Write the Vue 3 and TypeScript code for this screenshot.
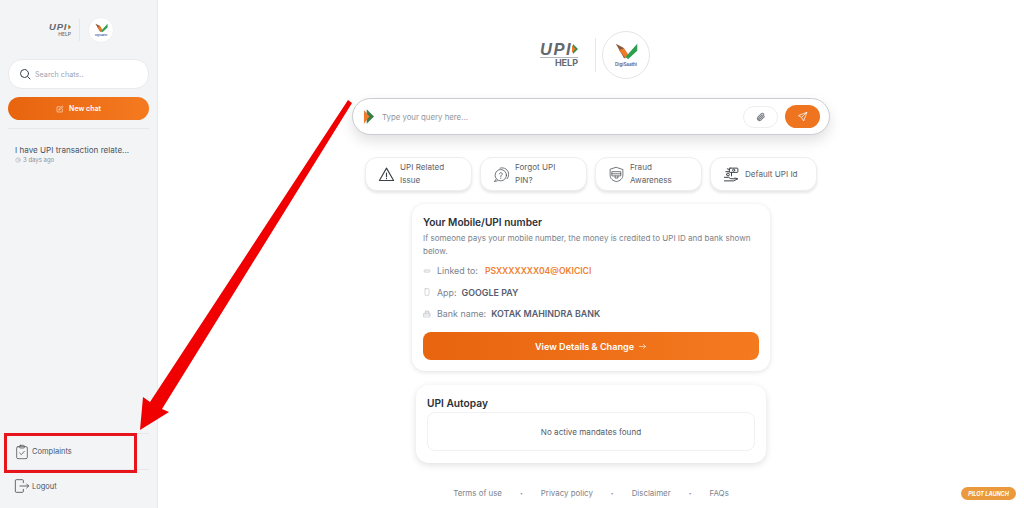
<script setup lang="ts">
const chips = [
  { id: 'issue', lines: ['UPI Related', 'Issue'] },
  { id: 'pin', lines: ['Forgot UPI', 'PIN?'] },
  { id: 'fraud', lines: ['Fraud', 'Awareness'] },
  { id: 'default', lines: ['Default UPI Id'] },
]
const footerLinks = ['Terms of use', 'Privacy policy', 'Disclaimer', 'FAQs']
</script>

<template>
  <div class="page">
    <aside class="sidebar">
      <div class="side-logo">
        <div class="upi small">
          <div class="upi-top">
            <span class="upi-word">UPI</span>
            <svg viewBox="0 0 6 10" class="upi-mark"><path d="M1 0l5 5-5 5z" fill="#2f8f4e"/><path d="M0 1l3.500 4L0 9z" fill="#ee7a2a"/></svg>
          </div>
          <span class="upi-strip"></span>
          <span class="upi-help">HELP</span>
        </div>
        <span class="divider"></span>
        <div class="saathi small">
          <svg viewBox="0 0 30 22" class="tick"><path d="M1 1l10 5 5 10-4 4z" fill="#8a5a3c"/><path d="M5 9l9 11 4-4-6-9z" fill="#ee7a2a"/><path d="M14 18L29 1v9L17 21z" fill="#2f9e4f"/></svg>
          <span>DigiSaathi</span>
        </div>
      </div>
      <div class="search">
        <svg viewBox="0 0 24 24" class="search-icon"><circle cx="11" cy="11" r="8"/><path d="M17 17l5 5"/></svg>
        <span>Search chats..</span>
      </div>
      <button class="new-chat">
        <svg viewBox="0 0 24 24" class="new-icon"><path d="M12 5H5a2 2 0 0 0-2 2v12a2 2 0 0 0 2 2h12a2 2 0 0 0 2-2v-7"/><path d="M9 15l1-4 9-8 2 2-9 9z"/></svg>
        New chat
      </button>
      <div class="rule first"></div>
      <div class="history">
        <div class="history-title">I have UPI transaction relate...</div>
        <div class="history-time">
          <svg viewBox="0 0 24 24"><circle cx="12" cy="12" r="9"/><path d="M12 7v5l3 2"/></svg>
          3 days ago
        </div>
      </div>
      <div class="side-bottom">
        <div class="rule"></div>
        <div class="side-item complaints">
          <svg viewBox="0 0 24 24"><rect x="4" y="4" width="16" height="18" rx="2"/><rect x="8.500" y="2" width="7" height="4" rx="1"/><path d="M8.500 13.500l2.500 2.500 4.500-5"/></svg>
          Complaints
        </div>
        <div class="rule"></div>
        <div class="side-item logout">
          <svg viewBox="0 0 24 24"><path d="M14 7V4a1.500 1.500 0 0 0-1.500-1.500h-9A1.500 1.500 0 0 0 2 4v16a1.500 1.500 0 0 0 1.500 1.500h9A1.500 1.500 0 0 0 14 20v-3"/><path d="M9 12h13M19 9l3 3-3 3"/></svg>
          Logout
        </div>
      </div>
    </aside>

    <main class="main">
      <div class="main-logo">
        <div class="upi">
          <div class="upi-top">
            <span class="upi-word">UPI</span>
            <svg viewBox="0 0 6 10" class="upi-mark"><path d="M1 0l5 5-5 5z" fill="#2f8f4e"/><path d="M0 1l3.500 4L0 9z" fill="#ee7a2a"/></svg>
          </div>
          <span class="upi-strip"></span>
          <span class="upi-help">HELP</span>
        </div>
        <span class="divider"></span>
        <div class="saathi">
          <svg viewBox="0 0 30 22" class="tick"><path d="M1 1l10 5 5 10-4 4z" fill="#8a5a3c"/><path d="M5 9l9 11 4-4-6-9z" fill="#ee7a2a"/><path d="M14 18L29 1v9L17 21z" fill="#2f9e4f"/></svg>
          <span>DigiSaathi</span>
        </div>
      </div>

      <div class="query">
        <svg viewBox="0 0 12 16" class="bhim"><path d="M4 0l8 8-8 8z" fill="#3a7d4a"/><path d="M1 1l6 7-6 8z" fill="#ee7a2a"/></svg>
        <span class="placeholder">Type your query here...</span>
        <span class="attach">
          <svg viewBox="0 0 24 24"><path d="M20 11l-8.500 8.500a5 5 0 0 1-7-7L13 4a3.300 3.300 0 0 1 4.700 4.700l-8.500 8.500a1.700 1.700 0 0 1-2.400-2.400L15 7"/></svg>
        </span>
        <span class="send">
          <svg viewBox="0 0 24 24"><path d="M21 3L3 10l7 4 4 7z"/><path d="M21 3L10 14"/></svg>
        </span>
      </div>

      <div class="chips">
        <div v-for="chip in chips" :key="chip.id" class="chip">
          <svg v-if="chip.id === 'issue'" viewBox="0 0 24 24" class="chip-icon"><path d="M12 3L2 20.500h20z"/><path d="M12 10v5M12 17.500v.5"/></svg>
          <svg v-else-if="chip.id === 'pin'" viewBox="0 0 24 24" class="chip-icon thin"><circle cx="11" cy="13" r="8"/><path d="M9 11a2 2 0 1 1 3 2c-1 .5-1 1-1 2M11 17v.5"/><path d="M10 3a9 9 0 0 1 12 9 8 8 0 0 1-2 6M4 19l-2 3 4-1"/></svg>
          <svg v-else-if="chip.id === 'fraud'" viewBox="0 0 24 24" class="chip-icon thin"><path d="M12 2l9 3v8c0 5-4 8-9 9-5-1-9-4-9-9V5z"/><path d="M6 8h12v6H6zM6 11h12M10 14v3h4v-3"/></svg>
          <svg v-else viewBox="0 0 24 24" class="chip-icon thin strong"><rect x="9" y="3" width="12" height="6" rx="1"/><circle cx="15" cy="6" r="1.500"/><path d="M12 9v5M6 4l3 1M4 8h5M2 16h6l3 2h6M2 21h13l6-3-4-1M5 12a2 2 0 1 0 4 0 2 2 0 1 0-4 0"/></svg>
          <span class="chip-text">
            <span v-for="line in chip.lines" :key="line">{{ line }}</span>
          </span>
        </div>
      </div>

      <section class="card mobile">
        <h2>Your Mobile/UPI number</h2>
        <p class="desc">If someone pays your mobile number, the money is credited to UPI ID and bank shown below.</p>
        <div class="row">
          <svg viewBox="0 0 24 24"><path d="M10 8H7a4 4 0 0 0 0 8h3M14 8h3a4 4 0 0 1 0 8h-3M8 12h8"/></svg>
          <span class="label">Linked to:</span><b class="link">PSXXXXXXX04@OKICICI</b>
        </div>
        <div class="row">
          <svg viewBox="0 0 24 24"><rect x="6" y="2" width="12" height="20" rx="2"/></svg>
          <span class="label">App:</span><b>GOOGLE PAY</b>
        </div>
        <div class="row">
          <svg viewBox="0 0 24 24"><path d="M7 10V3h10v7M3 10h18v11H3zM3 15h18M8 6h8"/></svg>
          <span class="label">Bank name:</span><b>KOTAK MAHINDRA BANK</b>
        </div>
        <button class="details">
          View Details &amp; Change
          <svg viewBox="0 0 24 24"><path d="M4 12h16M14 6l6 6-6 6"/></svg>
        </button>
      </section>

      <section class="card autopay">
        <h2>UPI Autopay</h2>
        <div class="empty">No active mandates found</div>
      </section>

      <footer class="footer">
        <template v-for="(item, i) in footerLinks" :key="item">
          <span v-if="i > 0" class="dot">•</span>
          <span>{{ item }}</span>
        </template>
      </footer>
    </main>

    <span class="pilot">PILOT LAUNCH</span>

    <svg class="annotation" viewBox="0 0 1024 508">
      <path d="M348 100L352 103L162 409L169 412L140 430L143 397L150 402z" fill="#f00000"/>
    </svg>
    <div class="red-box"></div>
  </div>
</template>

<style>
html, body { margin: 0; background: #fff; }
</style>

<style scoped>
.page {
  position: relative;
  display: flex;
  width: 1024px;
  height: 508px;
  overflow: hidden;
  font-family: Inter, "Liberation Sans", sans-serif;
  color: #374151;
  background: #fff;
}
svg { fill: none; stroke: currentColor; stroke-width: 1.6; stroke-linecap: round; stroke-linejoin: round; flex: none; }
.sidebar {
  flex: none;
  display: flex;
  flex-direction: column;
  background: #f3f4f6;
  border-right: 1px solid #e7e9ec;
  padding: 16px 8px 0;
  width: 141px;
}
.side-logo { display: flex; align-items: center; justify-content: center; gap: 8px; height: 28px; padding-left: 6px; }
.upi { width: 38px; display: flex; flex-direction: column; align-items: flex-end; }
.upi-top { display: flex; align-items: center; width: 100%; justify-content: space-between; }
.upi-word { font: italic 700 16.500px/13px "Liberation Sans", sans-serif; letter-spacing: 1.500px; color: #63676e; }
.upi-mark { width: 6px; height: 10px; stroke: none; }
.upi-strip { width: 100%; height: 1px; background: #b5b8bc; margin-top: 1px; }
.upi-help { font: 700 9px/10px Inter, sans-serif; color: #666b73; }
.upi.small { width: 22px; }
.upi.small .upi-word { font-size: 9.500px; line-height: 8px; letter-spacing: .8px; }
.upi.small .upi-mark { width: 3px; height: 6px; }
.upi.small .upi-strip { display: none; }
.upi.small .upi-help { font-size: 5px; line-height: 6px; font-weight: 500; }
.divider { width: 1px; align-self: stretch; background: #e5e7eb; margin: 3px 0; }
.saathi {
  width: 48px; height: 48px; border-radius: 50%; background: #fff; border: 1px solid #e3e5e8;
  box-sizing: border-box; display: flex; flex-direction: column; align-items: center; justify-content: center;
  font-size: 4.500px; font-weight: 600; color: #3f5aa0;
}
.saathi .tick { width: 23px; height: 17px; stroke: none; margin-bottom: 2px; }
.saathi.small { width: 26px; height: 26px; font-size: 2.500px; border-color: #eef0f2; }
.saathi.small .tick { width: 13px; height: 10px; margin-bottom: 1px; }
.search {
  margin-top: 15px; height: 28px; border-radius: 14px; background: #fff; border: 1px solid #e8eaed;
  display: flex; align-items: center; gap: 4px; padding: 0 10px; font-size: 7.200px; color: #9ca3af;
}
.search-icon { width: 12px; height: 12px; color: #374151; stroke-width: 2; }
.new-chat {
  margin-top: 8px; height: 23px; border: 0; border-radius: 12px; padding: 0;
  background: linear-gradient(90deg, #e8640f, #f47a20); color: #fff; font: 600 7px Inter, sans-serif;
  display: flex; align-items: center; justify-content: center; gap: 5px;
}
.new-icon { width: 8px; height: 8px; }
.rule { height: 1px; background: #e5e7eb; }
.rule.first { margin-top: 8px; }
.history { padding: 15px 7px 0; }
.history-title { font-size: 8.100px; line-height: 12px; color: #4b5563; white-space: nowrap; }
.history-time { font-size: 6px; color: #8b929c; display: flex; align-items: center; gap: 2px; }
.history-time svg { width: 6px; height: 6px; }
.side-bottom { margin-top: auto; padding-bottom: 6px; }
.side-item { display: flex; align-items: center; gap: 2px; padding-left: 6px; font-size: 7.500px; color: #4b5563; }
.complaints { height: 35px; }
.complaints svg { width: 16px; height: 16px; color: #555; stroke-width: 1.200; }
.logout { height: 32px; }
.logout svg { width: 16px; height: 16px; color: #444; stroke-width: 1.200; }
.main {
  flex: 1;
  display: flex;
  flex-direction: column;
  align-items: center;
  padding-top: 31px;
  min-width: 0;
}
.main-logo { display: flex; align-items: center; height: 48px; padding-left: 8px; }
.main-logo .divider { margin: 7px 6px 7px 17px; }
.query {
  margin-top: 19px; width: 478px; height: 37px; box-sizing: border-box; border-radius: 19px;
  background: #fff; border: 1px solid #c9ccd1; box-shadow: 0 6px 14px rgba(0,0,0,.12);
  display: flex; align-items: center; padding: 0 9px 0 10px;
}
.bhim { width: 11px; height: 15px; stroke: none; }
.placeholder { font-size: 7.800px; color: #8f96a0; margin-left: 8px; flex: 1; }
.attach {
  width: 35px; height: 22px; box-sizing: border-box; border: 1px solid #eceef0; border-radius: 11px;
  display: flex; align-items: center; justify-content: center; color: #7b8088;
}
.attach svg { width: 10px; height: 10px; stroke-width: 2.500; }
.send {
  width: 35px; height: 23px; border-radius: 12px; margin-left: 7px; background: #ee7420; color: #fff;
  display: flex; align-items: center; justify-content: center;
}
.send svg { width: 11px; height: 11px; }
.chips { margin-top: 22px; display: flex; gap: 8px; }
.chip {
  width: 107px; height: 34px; box-sizing: border-box; border: 1px solid #eceef0; border-radius: 12px; background: #fff;
  box-shadow: 0 2px 3px rgba(0,0,0,.1); display: flex; align-items: center; gap: 5px; padding-left: 12px; color: #3c4148;
}
.chip-icon { width: 17px; height: 17px; }
.chip-icon.thin { stroke-width: 1; }
.chip-icon.strong { stroke-width: 1.400; }
.chip-text { display: flex; flex-direction: column; font-size: 8.100px; line-height: 13px; color: #5d636c; }
.card { background: #fff; border-radius: 13px; box-sizing: border-box; box-shadow: 0 1px 5px rgba(0,0,0,.12); }
h2 { margin: 0; font-size: 10.100px; font-weight: 600; color: #2b3038; line-height: 14px; }
.mobile { margin-top: 13px; width: 358px; height: 167px; padding: 11px; }
.desc { margin: 3px 0 2px; font-size: 8.050px; line-height: 13px; color: #7b828c; }
.row { display: flex; align-items: center; height: 21.500px; font-size: 8.900px; color: #7b828c; }
.row svg { width: 8px; height: 8px; margin-right: 6px; color: #aeb3ba; }
.label { margin-right: 5px; }
.row b { font-weight: 600; color: #565e70; }
.row b.link { color: #ee7f34; margin-left: 2px; font-size: 8.600px; }
.details {
  margin-top: 7.500px; width: 100%; height: 28px; border: 0; border-radius: 8px; padding: 0;
  background: linear-gradient(90deg, #e8640f, #f47a20); color: #fff; font: 600 9.100px Inter, sans-serif;
  display: flex; align-items: center; justify-content: center; gap: 4px;
}
.details svg { width: 9px; height: 9px; }
.autopay { margin-top: 14px; width: 350px; height: 78px; padding: 11px; box-shadow: 0 2px 7px rgba(0,0,0,.13); }
.autopay h2 { font-size: 10.200px; }
.empty {
  margin-top: 2px; height: 39px; box-sizing: border-box; border: 1px solid #f0f1f3; border-radius: 8px;
  display: flex; align-items: center; justify-content: center; font-size: 8.100px; color: #555c66;
}
.footer { margin-top: 25px; display: flex; align-items: center; gap: 18px; font-size: 7.900px; color: #7d838c; }
.dot { font-size: 5px; color: #8a9099; }
.pilot {
  position: absolute; left: 961px; top: 487px; width: 55px; height: 13px; border-radius: 7px; background: #ea9a3d;
  color: #fff; font-size: 5.500px; font-weight: 700; font-style: italic; display: flex; align-items: center; justify-content: center;
}
.annotation { position: absolute; inset: 0; width: 1024px; height: 508px; stroke: none; pointer-events: none; }
.red-box {
  position: absolute; left: 4px; top: 433px; width: 133px; height: 40px; box-sizing: border-box; border: 3.500px solid #e8141c; pointer-events: none;
}
</style>
